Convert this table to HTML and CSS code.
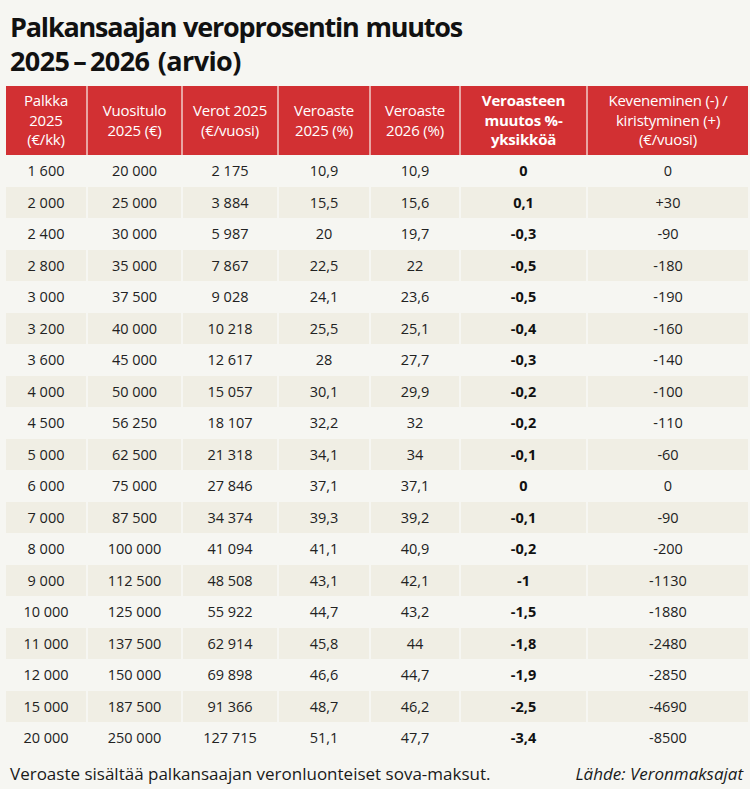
FILE: index.html
```html
<!DOCTYPE html>
<html lang="fi">
<head>
<meta charset="utf-8">
<title>Palkansaajan veroprosentin muutos</title>
<link rel="stylesheet" href="styles.css">
</head>
<body>
<div class="page">
  <h1 class="title">Palkansaajan veroprosentin muutos<br><span class="years">2025&thinsp;–&thinsp;2026 (arvio)</span></h1>
  <table class="tax">
    <colgroup>
      <col class="c1"><col class="c2"><col class="c3"><col class="c4"><col class="c5"><col class="c6"><col class="c7">
    </colgroup>
    <thead>
      <tr>
        <th>Palkka<br>2025<br>(€/kk)</th>
        <th>Vuositulo<br>2025 (€)</th>
        <th>Verot 2025<br>(€/vuosi)</th>
        <th>Veroaste<br>2025 (%)</th>
        <th>Veroaste<br>2026 (%)</th>
        <th class="strong">Veroasteen<br>muutos %-<br>yksikköä</th>
        <th>Keveneminen (-) /<br>kiristyminen (+)<br>(€/vuosi)</th>
      </tr>
    </thead>
    <tbody>
      <tr><td>1 600</td><td>20 000</td><td>2 175</td><td>10,9</td><td>10,9</td><td class="b">0</td><td>0</td></tr>
      <tr><td>2 000</td><td>25 000</td><td>3 884</td><td>15,5</td><td>15,6</td><td class="b">0,1</td><td>+30</td></tr>
      <tr><td>2 400</td><td>30 000</td><td>5 987</td><td>20</td><td>19,7</td><td class="b">-0,3</td><td>-90</td></tr>
      <tr><td>2 800</td><td>35 000</td><td>7 867</td><td>22,5</td><td>22</td><td class="b">-0,5</td><td>-180</td></tr>
      <tr><td>3 000</td><td>37 500</td><td>9 028</td><td>24,1</td><td>23,6</td><td class="b">-0,5</td><td>-190</td></tr>
      <tr><td>3 200</td><td>40 000</td><td>10 218</td><td>25,5</td><td>25,1</td><td class="b">-0,4</td><td>-160</td></tr>
      <tr><td>3 600</td><td>45 000</td><td>12 617</td><td>28</td><td>27,7</td><td class="b">-0,3</td><td>-140</td></tr>
      <tr><td>4 000</td><td>50 000</td><td>15 057</td><td>30,1</td><td>29,9</td><td class="b">-0,2</td><td>-100</td></tr>
      <tr><td>4 500</td><td>56 250</td><td>18 107</td><td>32,2</td><td>32</td><td class="b">-0,2</td><td>-110</td></tr>
      <tr><td>5 000</td><td>62 500</td><td>21 318</td><td>34,1</td><td>34</td><td class="b">-0,1</td><td>-60</td></tr>
      <tr><td>6 000</td><td>75 000</td><td>27 846</td><td>37,1</td><td>37,1</td><td class="b">0</td><td>0</td></tr>
      <tr><td>7 000</td><td>87 500</td><td>34 374</td><td>39,3</td><td>39,2</td><td class="b">-0,1</td><td>-90</td></tr>
      <tr><td>8 000</td><td>100 000</td><td>41 094</td><td>41,1</td><td>40,9</td><td class="b">-0,2</td><td>-200</td></tr>
      <tr><td>9 000</td><td>112 500</td><td>48 508</td><td>43,1</td><td>42,1</td><td class="b">-1</td><td>-1130</td></tr>
      <tr><td>10 000</td><td>125 000</td><td>55 922</td><td>44,7</td><td>43,2</td><td class="b">-1,5</td><td>-1880</td></tr>
      <tr><td>11 000</td><td>137 500</td><td>62 914</td><td>45,8</td><td>44</td><td class="b">-1,8</td><td>-2480</td></tr>
      <tr><td>12 000</td><td>150 000</td><td>69 898</td><td>46,6</td><td>44,7</td><td class="b">-1,9</td><td>-2850</td></tr>
      <tr><td>15 000</td><td>187 500</td><td>91 366</td><td>48,7</td><td>46,2</td><td class="b">-2,5</td><td>-4690</td></tr>
      <tr><td>20 000</td><td>250 000</td><td>127 715</td><td>51,1</td><td>47,7</td><td class="b">-3,4</td><td>-8500</td></tr>
    </tbody>
  </table>
  <div class="footer">
    <span class="note">Veroaste sisältää palkansaajan veronluonteiset sova-maksut.</span>
    <span class="source">Lähde: Veronmaksajat</span>
  </div>
</div>
</body>
</html>
```

FILE: styles.css
```css
html, body {
  margin: 0;
  padding: 0;
  background: #f6f6f2;
}
body {
  font-family: "Open Sans", "Noto Sans", sans-serif;
  color: #1a1a1a;
  width: 750px;
  height: 789px;
  overflow: hidden;
}
.page {
  padding: 10px 2px 0 6px;
}
.title {
  margin: 0 0 8px 4px;
  font-size: 27px;
  line-height: 34px;
  font-weight: 700;
  color: #111;
  letter-spacing: -1.2px;
  word-spacing: 1px;
}
.years {
  letter-spacing: -0.6px;
  word-spacing: 2px;
}
.tax {
  border-collapse: collapse;
  table-layout: fixed;
  width: 742px;
}
.c1 { width: 81px; }
.c2 { width: 95px; }
.c3 { width: 96px; }
.c4 { width: 92px; }
.c5 { width: 90px; }
.c6 { width: 127px; }
.c7 { width: 161px; }
.tax th {
  background: #d23033;
  color: #fff;
  font-weight: 400;
  font-size: 15px;
  line-height: 19.5px;
  height: 69px;
  padding: 0;
  text-align: center;
  vertical-align: middle;
  border-left: 2px solid #e9a5a3;
  letter-spacing: -0.2px;
}
.tax th:first-child { border-left: none; }
.tax th.strong { font-weight: 700; }
.tax td {
  height: 31.5px;
  padding: 0;
  text-align: center;
  vertical-align: middle;
  font-size: 14.5px;
  color: #222;
  border-left: 2px solid #f6f6f2;
}
.tax td:first-child { border-left: none; }
.tax tbody tr:nth-child(even) td { background: #f0eee4; }
.tax td.b { font-weight: 700; color: #111; }
.footer {
  display: flex;
  justify-content: space-between;
  align-items: baseline;
  padding: 8px 5px 0 4px;
  font-size: 17px;
  color: #1a1a1a;
}
.source { font-style: italic; }
```
